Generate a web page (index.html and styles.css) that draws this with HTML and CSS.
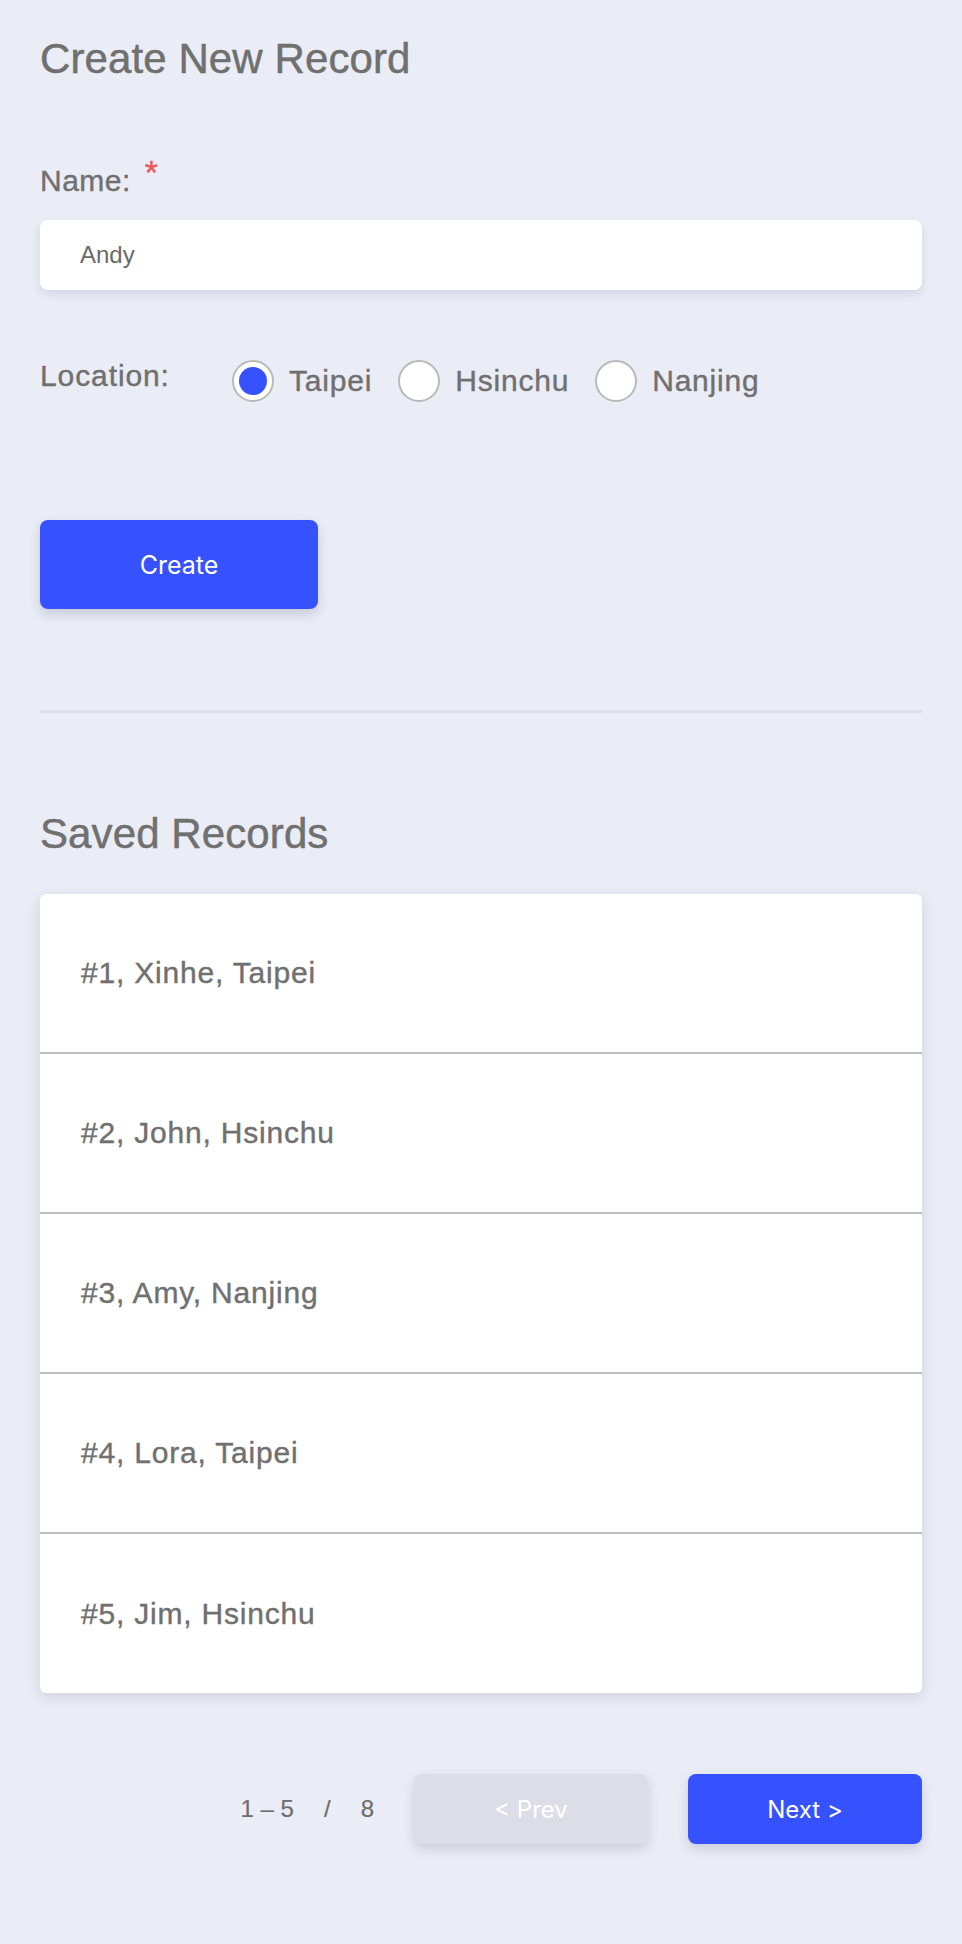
FILE: index.html
```html
<!DOCTYPE html>
<html lang="en">
<head>
<meta charset="utf-8">
<title>Records</title>
<link rel="stylesheet" href="styles.css">
</head>
<body>
<main class="page">
  <h1 class="title">Create New Record</h1>

  <div class="field-label">Name:<span class="required">*</span></div>
  <input class="text-input" type="text" value="Andy">

  <div class="location-row">
    <div class="location-label">Location:</div>
    <div class="radio-group">
      <label class="radio-item">
        <span class="radio checked"></span>
        <span class="radio-text">Taipei</span>
      </label>
      <label class="radio-item">
        <span class="radio"></span>
        <span class="radio-text">Hsinchu</span>
      </label>
      <label class="radio-item">
        <span class="radio"></span>
        <span class="radio-text">Nanjing</span>
      </label>
    </div>
  </div>

  <button class="btn btn-create" type="button">Create</button>

  <hr class="divider">

  <h2 class="title section-title">Saved Records</h2>

  <ul class="record-list">
    <li class="record">#1, Xinhe, Taipei</li>
    <li class="record">#2, John, Hsinchu</li>
    <li class="record">#3, Amy, Nanjing</li>
    <li class="record">#4, Lora, Taipei</li>
    <li class="record">#5, Jim, Hsinchu</li>
  </ul>

  <div class="pager">
    <div class="pager-info"><span>1 – 5</span><span class="slash">/</span><span>8</span></div>
    <button class="btn btn-page btn-prev" type="button">&lt; Prev</button>
    <button class="btn btn-page btn-next" type="button">Next &gt;</button>
  </div>
</main>
</body>
</html>
```

FILE: styles.css
```css
html, body {
  margin: 0;
  padding: 0;
  background: #eaedf5;
}

body {
  font-family: "Liberation Sans", Arial, sans-serif;
  color: #707070;
}

.page {
  padding: 34px 40px 100px;
  display: flex;
  flex-direction: column;
}

.title {
  margin: 0;
  font-size: 42px;
  line-height: 50px;
  font-weight: normal;
  color: #707070;
  letter-spacing: 0.1px;
  -webkit-text-stroke: 0.5px #707070;
}

.field-label {
  margin-top: 79px;
  height: 36px;
  font-size: 30px;
  line-height: 36px;
  letter-spacing: 0.5px;
  -webkit-text-stroke: 0.4px #707070;
}

.required {
  color: #e85a5a;
  font-size: 34px;
  line-height: 0;
  margin-left: 14px;
  position: relative;
  top: -7px;
  -webkit-text-stroke: 0.4px #e85a5a;
}

.text-input {
  margin-top: 21px;
  box-sizing: border-box;
  width: 100%;
  height: 70px;
  border: 0;
  border-radius: 8px;
  background: #fff;
  padding: 0 40px;
  font-family: "Liberation Sans", Arial, sans-serif;
  font-size: 24px;
  color: #6a6a6a;
  box-shadow: 0 4px 10px rgba(60, 70, 110, 0.14);
  outline: none;
}

.location-row {
  margin-top: 68px;
  display: flex;
  align-items: flex-start;
}

.location-label {
  width: 192px;
  font-size: 30px;
  line-height: 36px;
  letter-spacing: 0.9px;
  -webkit-text-stroke: 0.4px #707070;
}

.radio-group {
  margin-top: 2px;
  display: flex;
  align-items: center;
}

.radio-item {
  display: flex;
  align-items: center;
  margin-right: 26px;
}

.radio-item:last-child {
  margin-right: 0;
}

.radio {
  box-sizing: border-box;
  width: 42px;
  height: 42px;
  border: 2px solid #b9b9b9;
  border-radius: 50%;
  background: #fff;
  display: flex;
  align-items: center;
  justify-content: center;
}

.radio.checked::after {
  content: "";
  width: 28px;
  height: 28px;
  border-radius: 50%;
  background: #3652ff;
}

.radio-text {
  margin-left: 15px;
  font-size: 30px;
  line-height: 42px;
  letter-spacing: 0.8px;
  -webkit-text-stroke: 0.4px #707070;
}

.btn {
  border: 0;
  cursor: pointer;
  font-family: Inter, "Liberation Sans", sans-serif;
  color: #fff;
  border-radius: 8px;
  padding: 0;
}

.btn-create {
  margin-top: 118px;
  width: 278px;
  height: 89px;
  background: #3652ff;
  font-size: 25px;
  box-shadow: 0 5px 12px rgba(50, 60, 110, 0.2);
}

.divider {
  margin: 101px 0 0;
  height: 3px;
  border: 0;
  background: #dcdee9;
}

.section-title {
  margin-top: 96px;
}

.record-list {
  list-style: none;
  margin: 35px 0 0;
  padding: 0;
  background: #fff;
  border-radius: 6px;
  box-shadow: 0 4px 14px rgba(60, 70, 110, 0.16);
  overflow: hidden;
}

.record {
  height: 158px;
  border-bottom: 2px solid #bbbbbb;
  padding-left: 41px;
  display: flex;
  align-items: center;
  font-size: 30px;
  letter-spacing: 0.8px;
  color: #707070;
  -webkit-text-stroke: 0.4px #707070;
}

.record:last-child {
  border-bottom: 0;
  height: 159px;
}

.pager {
  margin-top: 81px;
  display: flex;
  justify-content: flex-end;
  align-items: center;
}

.pager-info {
  font-size: 24px;
  color: #6e6e6e;
  display: flex;
  white-space: pre;
  -webkit-text-stroke: 0.2px #6e6e6e;
}

.slash {
  margin: 0 30px;
}

.btn-page {
  width: 234px;
  height: 70px;
  margin-left: 40px;
  font-size: 24px;
  box-shadow: 0 5px 12px rgba(50, 60, 110, 0.18);
}

.btn-prev {
  background: #dddde7;
}

.btn-next {
  background: #3652ff;
}
```
